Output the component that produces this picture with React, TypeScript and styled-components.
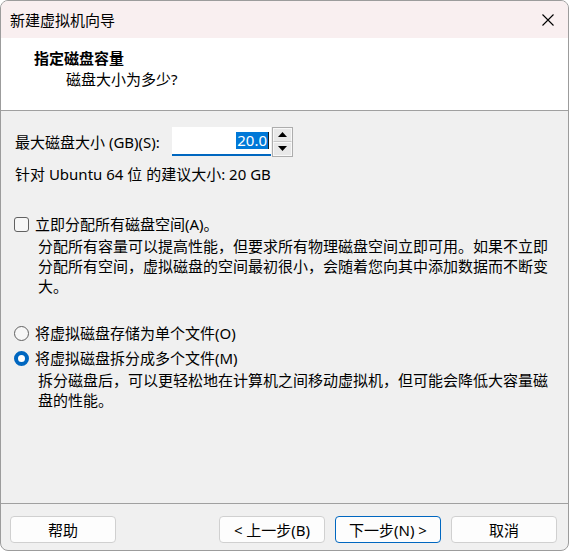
import React from 'react';
import styled, { createGlobalStyle } from 'styled-components';

const GlobalStyle = createGlobalStyle`
  html, body {
    margin: 0;
    padding: 0;
    background: #ffffff;
  }
  body {
    font-family: "Noto Sans", "Noto Sans CJK SC", sans-serif;
    font-size: 15px;
    color: #000000;
  }
`;

const Window = styled.div`
  box-sizing: border-box;
  width: 569px;
  height: 551px;
  border: 1px solid #9c9c9c;
  border-radius: 8px;
  overflow: hidden;
  display: flex;
  flex-direction: column;
  background: #f0f0f0;
`;

const TitleBar = styled.div`
  height: 37px;
  flex-shrink: 0;
  display: flex;
  align-items: center;
  justify-content: space-between;
  padding: 0 14px 0 9px;
  background: #f9eff0;
  line-height: 20px;
`;

const CloseButton = styled.div`
  width: 12px;
  height: 12px;
  display: flex;
  margin-top: 1px;
`;

const Header = styled.div`
  box-sizing: border-box;
  height: 73px;
  flex-shrink: 0;
  background: #ffffff;
  border-bottom: 1px solid #a0a0a0;
  padding: 10px 0 0 33px;
  line-height: 21px;
`;

const HeaderTitle = styled.div`
  font-weight: 700;
`;

const HeaderSub = styled.div`
  padding-left: 32px;
`;

const Body = styled.div`
  flex: 1;
  padding: 16px 14px 0 14px;
  line-height: 20px;
`;

const SizeRow = styled.div`
  display: flex;
  align-items: center;
  height: 29px;
`;

const SizeLabel = styled.span`
  width: 157px;
`;

const SpinField = styled.div`
  box-sizing: border-box;
  width: 99px;
  height: 29px;
  background: #ffffff;
  border-bottom: 2px solid #0067c0;
  display: flex;
  align-items: center;
  justify-content: flex-end;
  padding-right: 2px;
`;

const Selection = styled.span`
  background: #0078d7;
  color: #ffffff;
  line-height: 17px;
  padding: 0 1px;
`;

const Caret = styled.span`
  width: 1px;
  height: 17px;
  background: #1a1a1a;
`;

const SpinButtons = styled.div`
  box-sizing: border-box;
  width: 21px;
  height: 30px;
  margin-left: 1px;
  border: 1px solid #adadad;
  display: flex;
  flex-direction: column;
`;

const SpinButton = styled.div<{ $top?: boolean }>`
  flex: 1;
  display: flex;
  align-items: center;
  justify-content: center;
  background: #e8e8e8;
  border: 1px solid #f8f8f8;
  border-bottom-color: ${p => (p.$top ? '#c8c8c8' : '#f8f8f8')};
`;

const Recommend = styled.div`
  margin-top: 8px;
`;

const OptionRow = styled.div<{ $gap: number }>`
  display: flex;
  align-items: center;
  gap: 6px;
  margin-top: ${p => p.$gap}px;
`;

const Checkbox = styled.span`
  box-sizing: border-box;
  width: 15px;
  height: 15px;
  border: 1px solid #616161;
  border-radius: 3px;
  background: #f7f7f7;
  margin-left: -1px;
`;

const Radio = styled.span<{ $checked?: boolean }>`
  box-sizing: border-box;
  width: 15px;
  height: 15px;
  margin-left: -1px;
  border-radius: 50%;
  border: ${p => (p.$checked ? '4.5px solid #0067c0' : '1px solid #616161')};
  background: ${p => (p.$checked ? '#ffffff' : '#f7f7f7')};
`;

const Description = styled.div`
  margin-top: 2px;
  padding-left: 23px;
`;

const Footer = styled.div`
  box-sizing: border-box;
  height: 47px;
  flex-shrink: 0;
  border-top: 1px solid #a0a0a0;
  display: flex;
  justify-content: space-between;
  align-items: flex-start;
  padding: 12px 11px 0 9px;
`;

const ButtonGroup = styled.div`
  display: flex;
  gap: 10px;
`;

const Button = styled.button<{ $primary?: boolean }>`
  box-sizing: border-box;
  width: 106px;
  height: 27px;
  border-radius: 4px;
  border: 1px solid ${p => (p.$primary ? '#0067c0' : '#d0d0d0')};
  background: #fdfdfd;
  font-family: inherit;
  font-size: 15px;
  line-height: 20px;
  color: #000000;
  padding: 0;
`;

const Arrow = ({ up }: { up?: boolean }) => (
  <svg width="9" height="5" viewBox="0 0 9 5">
    <path d={up ? 'M0 5 L4.5 0 L9 5 Z' : 'M0 0 L4.5 5 L9 0 Z'} fill="#000" />
  </svg>
);

export default function App() {
  return (
    <>
      <GlobalStyle />
      <Window>
        <TitleBar>
          <span>新建虚拟机向导</span>
          <CloseButton>
            <svg width="12" height="12" viewBox="0 0 12 12">
              <path d="M0.5 0.5 L11.5 11.5 M11.5 0.5 L0.5 11.5" stroke="#000" strokeWidth="1.1" />
            </svg>
          </CloseButton>
        </TitleBar>
        <Header>
          <HeaderTitle>指定磁盘容量</HeaderTitle>
          <HeaderSub>磁盘大小为多少?</HeaderSub>
        </Header>
        <Body>
          <SizeRow>
            <SizeLabel>最大磁盘大小 (GB)(S):</SizeLabel>
            <SpinField>
              <Selection>20.0</Selection>
              <Caret />
            </SpinField>
            <SpinButtons>
              <SpinButton $top>
                <Arrow up />
              </SpinButton>
              <SpinButton>
                <Arrow />
              </SpinButton>
            </SpinButtons>
          </SizeRow>
          <Recommend>针对 Ubuntu 64 位 的建议大小: 20 GB</Recommend>

          <OptionRow $gap={30}>
            <Checkbox />
            <span>立即分配所有磁盘空间(A)。</span>
          </OptionRow>
          <Description>
            分配所有容量可以提高性能，但要求所有物理磁盘空间立即可用。如果不立即分配所有空间，虚拟磁盘的空间最初很小，会随着您向其中添加数据而不断变大。
          </Description>

          <OptionRow $gap={27}>
            <Radio />
            <span>将虚拟磁盘存储为单个文件(O)</span>
          </OptionRow>
          <OptionRow $gap={5}>
            <Radio $checked />
            <span>将虚拟磁盘拆分成多个文件(M)</span>
          </OptionRow>
          <Description>
            拆分磁盘后，可以更轻松地在计算机之间移动虚拟机，但可能会降低大容量磁盘的性能。
          </Description>
        </Body>
        <Footer>
          <Button>帮助</Button>
          <ButtonGroup>
            <Button>&lt; 上一步(B)</Button>
            <Button $primary>下一步(N) &gt;</Button>
            <Button>取消</Button>
          </ButtonGroup>
        </Footer>
      </Window>
    </>
  );
}
